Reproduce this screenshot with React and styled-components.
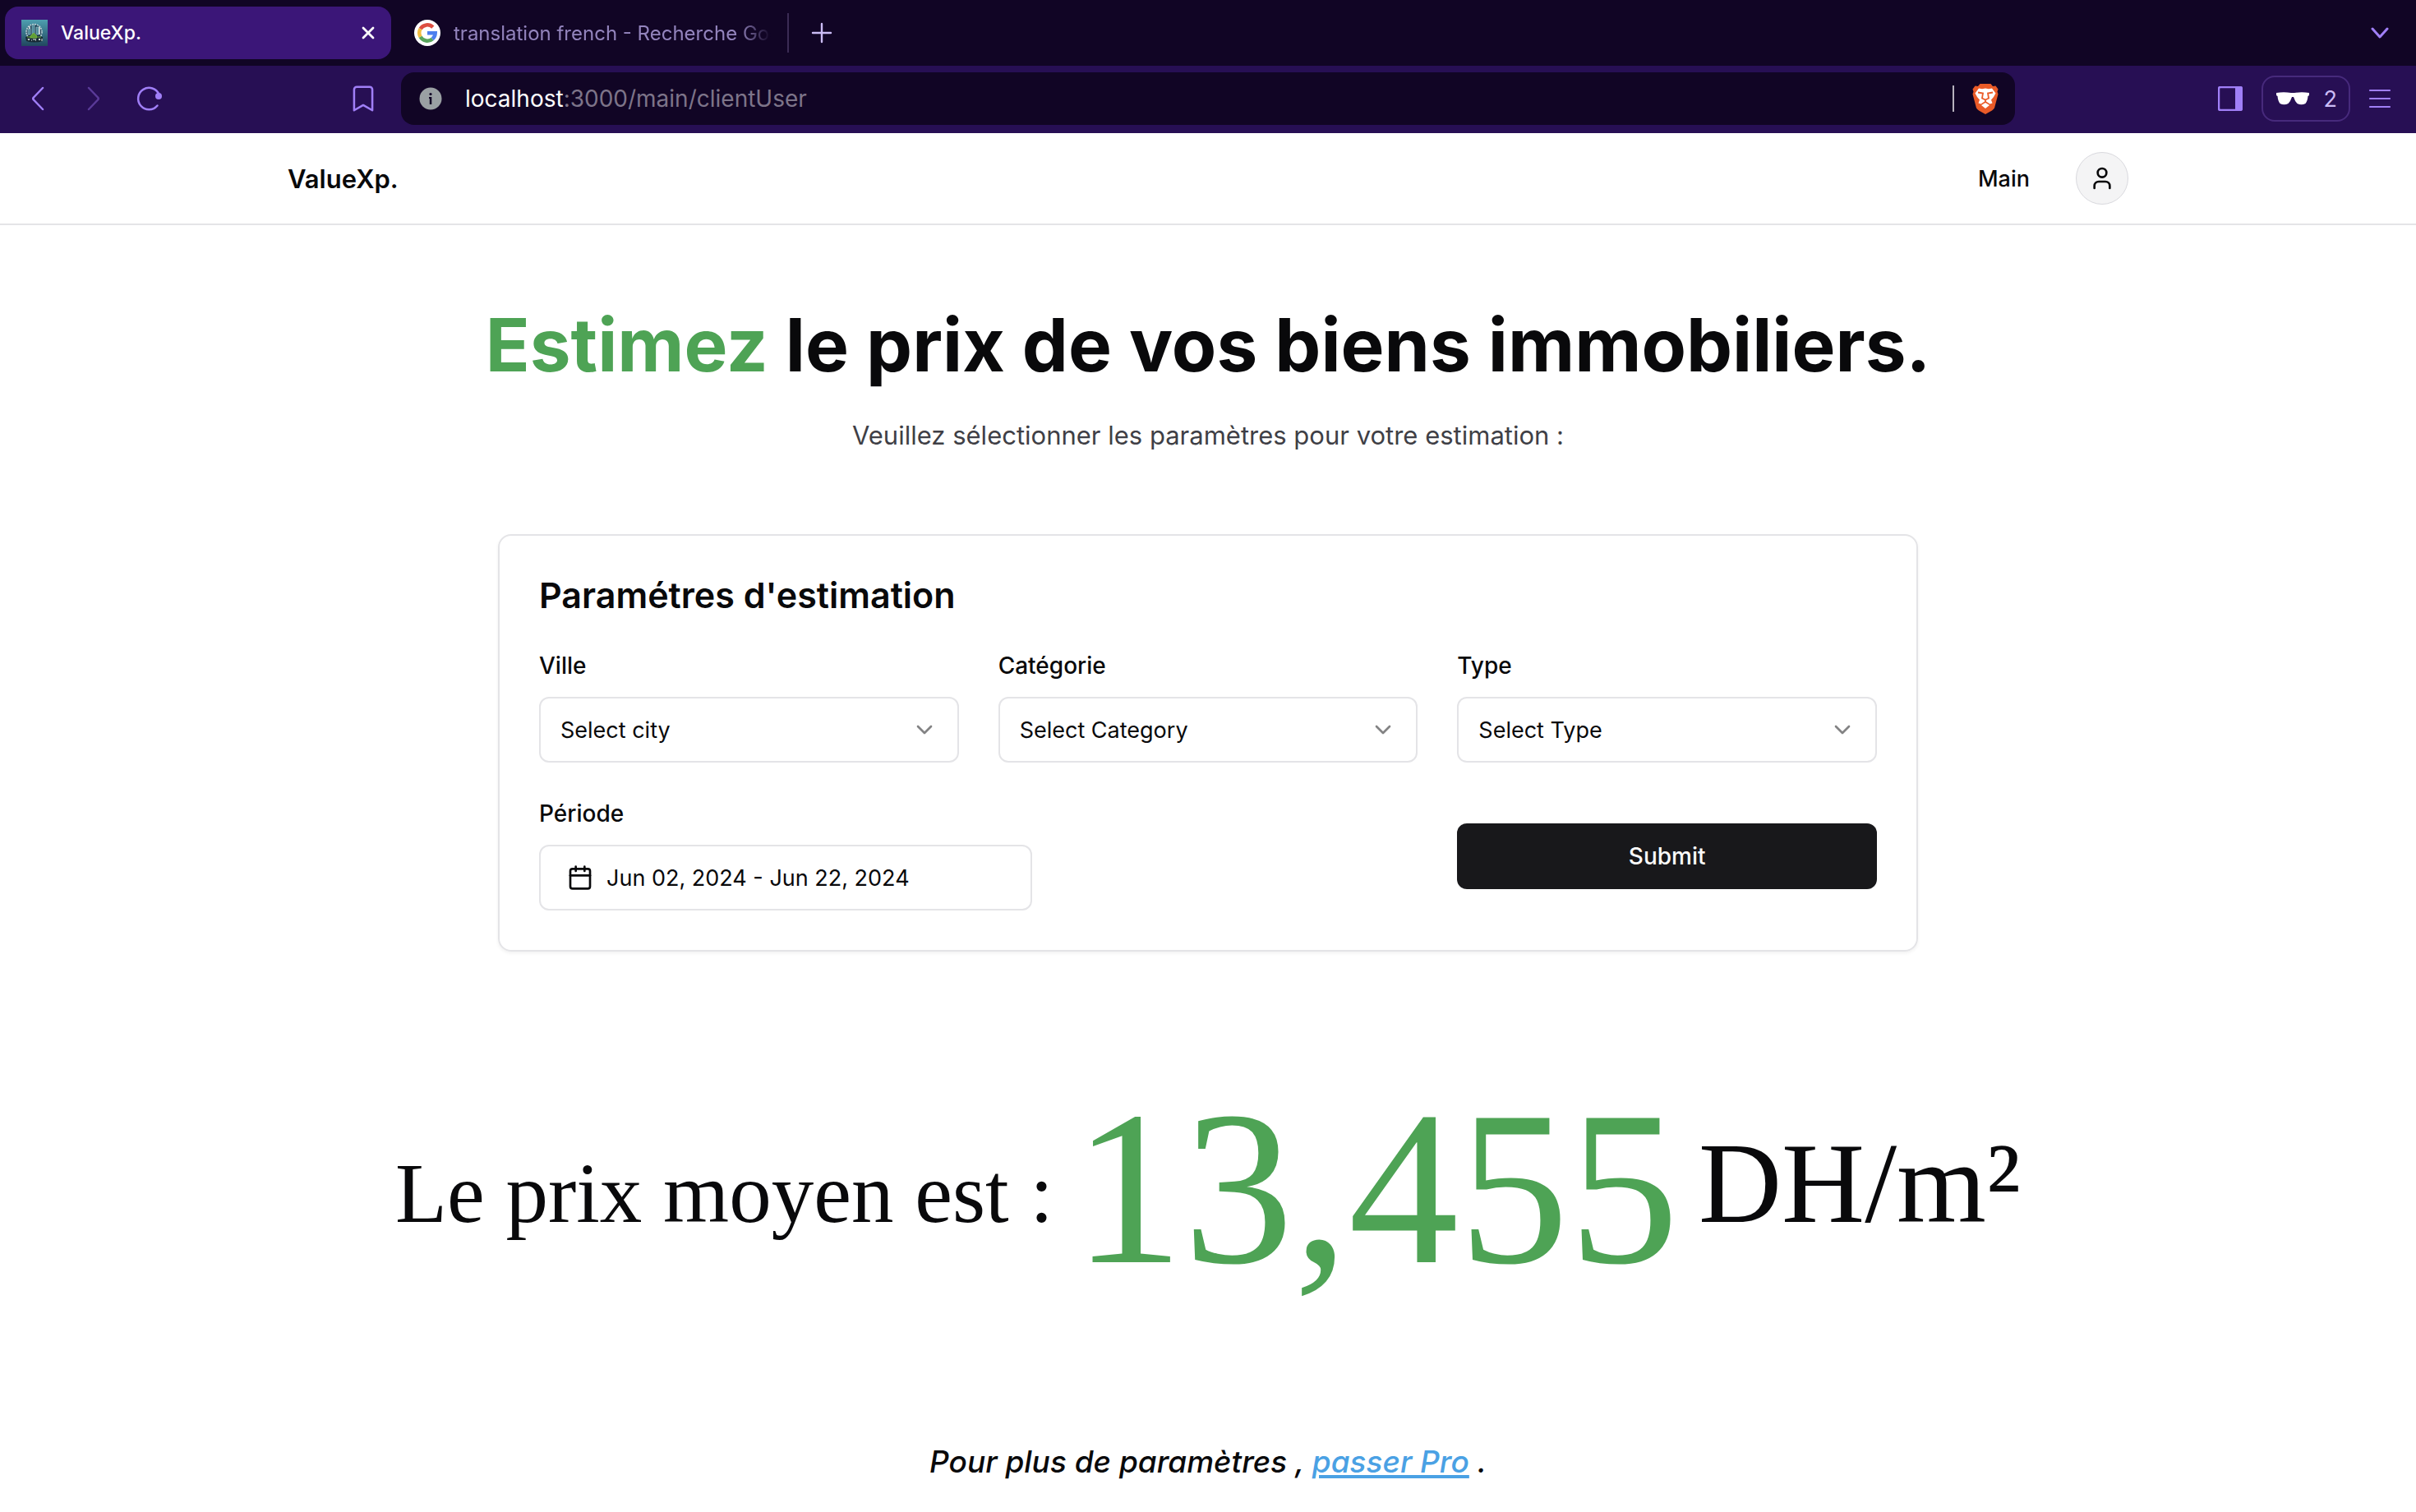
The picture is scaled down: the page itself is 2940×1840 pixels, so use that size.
import React from "react";
import styled, { createGlobalStyle } from "styled-components";
import { Bookmark, Calendar, ChevronDown, User } from "lucide-react";

const sans = `Inter, "Liberation Sans", sans-serif`;
const serif = `"Liberation Serif", serif`;

const color = {
  ink: "#09090b",
  border: "#e4e4e7",
  green: "#4ea355",
  link: "#4aa1e4",
  strip: "#110525",
  toolbar: "#270f54",
  tab: "#3b1678",
  accent: "#a07ff7",
};

const GlobalStyle = createGlobalStyle`
  * { box-sizing: border-box; }
  body { margin: 0; background: #fff; color: ${color.ink}; font-family: ${sans}; font-size: 28px; }
  button, select { font: inherit; color: inherit; }
  h1, h2, p { margin: 0; }
  svg { display: block; flex: none; }
`;

/* ---------- browser frame ---------- */

const TabStrip = styled.div`
  display: flex;
  align-items: center;
  height: 80px;
  padding: 0 32px 0 6px;
  background: ${color.strip};
`;

const Tabs = styled.div`
  display: flex;
  align-items: center;
  gap: 8px;
  padding-right: 4px;
`;

const Tab = styled.div`
  display: flex;
  align-items: center;
  gap: 16px;
  width: 470px;
  height: 64px;
  padding: 0 ${(p) => (p.$active ? 20 : 16)}px 0 20px;
  border-radius: 16px;
  background: ${(p) => (p.$active ? color.tab : "transparent")};
  color: ${(p) => (p.$active ? "#fff" : "#9384bd")};
  font-size: ${(p) => (p.$active ? 23 : 24)}px;
  font-weight: ${(p) => (p.$active ? 500 : 400)};
`;

const TabTitle = styled.span`
  flex: 1;
  min-width: 0;
  overflow: hidden;
  white-space: nowrap;
  mask-image: ${(p) => (p.$fade ? "linear-gradient(to right, #000 90%, transparent)" : "none")};
`;

const Rule = styled.span`
  width: 2px;
  height: ${(p) => p.$height}px;
  background: ${(p) => p.$color};
`;

const IconButton = styled.button`
  display: flex;
  align-items: center;
  justify-content: center;
  width: ${(p) => p.$width || 32}px;
  height: 40px;
  padding: 0;
  border: 0;
  background: none;
  color: ${(p) => p.$color || color.accent};
`;

const NewTab = styled.div`
  flex: 1;
  padding-left: 24px;
`;

const Toolbar = styled.div`
  display: flex;
  align-items: center;
  height: 82px;
  padding: 0 30px 2px 28px;
  background: ${color.toolbar};
`;

const NavButtons = styled.div`
  display: flex;
  flex: none;
  gap: 36px;
  width: 395px;
`;

const AddressArea = styled.div`
  display: flex;
  flex: 1;
  align-items: center;
  gap: 27px;
  padding-right: 246px;
`;

const AddressBar = styled.div`
  display: flex;
  flex: 1;
  align-items: center;
  gap: 22px;
  height: 64px;
  padding: 0 20px 0 22px;
  border-radius: 16px;
  background: ${color.strip};
`;

const Address = styled.button`
  display: flex;
  flex: 1;
  align-items: center;
  gap: 28px;
  padding: 0;
  border: 0;
  background: none;
  color: #7d7489;
  font-size: 28px;
  text-align: left;

  b {
    color: #fff;
    font-weight: 400;
  }
`;

const ToolbarEnd = styled.div`
  display: flex;
  align-items: center;
  gap: 22px;
`;

const PrivateBadge = styled.button`
  display: flex;
  align-items: center;
  justify-content: space-between;
  width: 108px;
  height: 56px;
  padding: 0 14px 0 16px;
  border: 2px solid #472a7c;
  border-radius: 16px;
  background: none;
  color: #cbbcf5;
  font-size: 27px;
`;

/* ---------- page ---------- */

const Header = styled.header`
  display: flex;
  align-items: center;
  justify-content: space-between;
  height: 112px;
  padding: 0 350px;
  border-bottom: 2px solid ${color.border};
`;

const Brand = styled.a`
  color: inherit;
  font-size: 31px;
  font-weight: 600;
  text-decoration: none;
`;

const Nav = styled.nav`
  display: flex;
  align-items: center;
  gap: 56px;
`;

const NavLink = styled.a`
  color: inherit;
  font-size: 27px;
  font-weight: 500;
  text-decoration: none;
`;

const Avatar = styled.button`
  display: flex;
  align-items: center;
  justify-content: center;
  width: 64px;
  height: 64px;
  padding: 0;
  border: 1px solid #d9d9de;
  border-radius: 50%;
  background: #f4f4f5;
`;

const Main = styled.main`
  display: flex;
  flex-direction: column;
  align-items: center;
  padding: 98px 48px 32px;
`;

const Title = styled.h1`
  font-size: 89px;
  line-height: 96px;
  font-weight: 700;
`;

const Green = styled.span`
  color: ${color.green};
`;

const Subtitle = styled.p`
  margin-top: 34px;
  color: #3f3f46;
  font-size: 31px;
  line-height: 56px;
`;

const Card = styled.form`
  width: 100%;
  max-width: 1728px;
  margin-top: 92px;
  padding: 48px;
  border: 2px solid ${color.border};
  border-radius: 16px;
  box-shadow: 0 2px 4px rgba(0, 0, 0, 0.06);
`;

const CardTitle = styled.h2`
  font-size: 43px;
  line-height: 48px;
  font-weight: 600;
`;

const Fields = styled.div`
  display: grid;
  grid-template-columns: repeat(3, 1fr);
  gap: 48px;
  margin-top: 48px;
`;

const FieldRow = styled(Fields)`
  align-items: center;
`;

const Field = styled.div`
  display: flex;
  flex-direction: column;
  gap: 24px;
  grid-column: span ${(p) => p.$span || 1};
`;

const Label = styled.label`
  font-size: 28px;
  line-height: 28px;
  font-weight: 500;
`;

const SelectBox = styled.div`
  display: grid;
  align-items: center;

  > * {
    grid-area: 1 / 1;
  }

  svg {
    justify-self: end;
    margin-right: 26px;
    opacity: 0.5;
    pointer-events: none;
  }
`;

const Select = styled.select`
  width: 100%;
  height: 80px;
  padding: 0 64px 0 24px;
  appearance: none;
  border: 2px solid ${color.border};
  border-radius: 12px;
  background: #fff;
  font-size: 27px;
`;

const DateButton = styled.button`
  display: flex;
  align-items: center;
  gap: 16px;
  width: 600px;
  height: 80px;
  padding: 0 32px;
  border: 2px solid ${color.border};
  border-radius: 12px;
  background: #fff;
  font-size: 27px;
`;

const Submit = styled.button`
  height: 80px;
  border: 0;
  border-radius: 12px;
  background: #18181b;
  color: #fafafa;
  font-size: 28px;
  font-weight: 500;
`;

const Price = styled.p`
  display: flex;
  align-items: baseline;
  gap: 24px;
  margin-top: 212px;
  font-family: ${serif};
  font-size: 103px;
  line-height: 140px;
  white-space: nowrap;
`;

const Amount = styled(Green)`
  align-self: center;
  font-size: 268px;
  line-height: 140px;
`;

const Unit = styled.span`
  font-size: 140px;
  line-height: 140px;
`;

const Upgrade = styled.p`
  margin-top: 229px;
  font-size: 37px;
  line-height: 56px;
  font-style: italic;
  font-weight: 500;

  a {
    color: ${color.link};
    text-decoration-thickness: 4px;
    text-underline-offset: 3px;
  }
`;

/* ---------- drawings ---------- */

const stroke = { fill: "none", stroke: "currentColor", strokeLinecap: "round", strokeLinejoin: "round" };

const SiteIcon = () => (
  <svg width="32" height="32" viewBox="0 0 32 32" aria-hidden="true">
    <defs>
      <linearGradient id="sky" x2="0" y2="1">
        <stop stopColor="#4e9fb0" />
        <stop offset="1" stopColor="#21475f" />
      </linearGradient>
    </defs>
    <path fill="url(#sky)" d="M0 0h32v32H0z" />
    <circle cx="15.500" cy="15" r="9.500" fill="#20455a" stroke="#c5d8dc" strokeWidth="1.500" strokeDasharray="2 1" />
    <path d="M8 18v-7h3v7zm5 0V6h3v12zm5 0V9h3v9z" fill="#4a8796" stroke="#a9cfd4" strokeWidth=".6" />
    <path d="M22 9v9M10 8v3" stroke="#e8eef0" strokeWidth="1.500" />
    <path d="M5 21l6-2 4-3 4 3 7 2v5q-10 3-20 0z" fill="#172a35" />
    <path d="M11 20l4-4 4 4v2h-8zM7 21h4M20 21h4" fill="#5f9e35" stroke="#76b342" />
    <path d="M8 23l1 2 1-2m2 2h1m2-2v2m2-2v2h1m3-2l2 2m0-2l-2 2m4-2v3" stroke="#e9f0e8" fill="none" />
  </svg>
);

const GoogleIcon = () => (
  <svg width="32" height="32" viewBox="0 0 32 32" aria-hidden="true">
    <circle cx="16" cy="16" r="16" fill="#fff" />
    <g fill="none" strokeWidth="4.500">
      <path stroke="#dc4e41" d="M22.800 9.200A9.700 9.700 0 0 0 7.600 11.150" />
      <path stroke="#f2bd42" d="M7.600 11.150A9.700 9.700 0 0 0 7.600 20.850" />
      <path stroke="#58a55c" d="M7.600 20.850A9.700 9.700 0 0 0 22.200 23.400" />
      <path stroke="#4e80ee" d="M22.200 23.400A9.700 9.700 0 0 0 25.700 16.300H16" />
    </g>
  </svg>
);

const CloseIcon = () => (
  <svg width="16" height="16" viewBox="0 0 16 16" aria-hidden="true">
    <path {...stroke} strokeWidth="2.800" d="M2 2l12 12M14 2L2 14" />
  </svg>
);

const PlusIcon = () => (
  <svg width="26" height="26" viewBox="0 0 26 26" aria-hidden="true">
    <path {...stroke} strokeWidth="2.400" d="M13 2v22M2 13h22" />
  </svg>
);

const Chevron = ({ forward }) => (
  <svg width="16" height="30" viewBox="0 0 16 30" aria-hidden="true">
    <path {...stroke} strokeWidth="2.500" d={forward ? "M2 2l11 11.500q1.500 1.500 0 3L2 28" : "M14 2L3 13.500q-1.500 1.500 0 3L14 28"} />
  </svg>
);

const TabsChevron = () => (
  <svg width="22" height="16" viewBox="0 0 22 16" aria-hidden="true">
    <path {...stroke} strokeWidth="3" d="M2 3l9 10 9-10" />
  </svg>
);

const ReloadIcon = () => (
  <svg width="32" height="32" viewBox="0 0 32 32" aria-hidden="true">
    <path {...stroke} strokeWidth="2.500" d="M25.500 24.500A13.200 13.200 0 1 1 27.500 11" />
    <circle cx="27" cy="13" r="4" fill="currentColor" />
  </svg>
);

const InfoIcon = () => (
  <svg width="28" height="28" viewBox="0 0 28 28" aria-hidden="true">
    <circle cx="14" cy="14" r="13.500" fill="#9aa0a3" />
    <circle cx="14" cy="8.500" r="1.600" fill={color.strip} />
    <path fill={color.strip} d="M12 12h3.300v9h-2.500v-7H12z" />
  </svg>
);

const LionIcon = () => (
  <svg width="32" height="38" viewBox="0 0 32 38" aria-hidden="true">
    <path fill="#ea5b28" d="M9.500 1h13l2.500 3 3.500-.5 3 4-1 3 1 3-4.500 17Q26 32 24 33.500L16 38l-8-4.500Q6 32 5 30.500L.500 13.500l1-3-1-3 3-4L7 4z" />
    <path fill="#fff" d="M16 6.500l4 .7 4-.7 4.500 6-2.500 4.500-3 3.500 1.500 4-3 1-4.500-3h-2l-4.500 3-3-1 1.500-4-3-3.500L3.500 12.500 8 6.500l4 .7z" />
    <path fill="none" stroke="#ea5b28" strokeWidth="1.800" d="M7 11.500l6 1-1 6 4 2 4-2-1-6 6-1M16 20v5" />
    <path fill="#fff" d="M16 24l5 3-5 4-5-4z" />
  </svg>
);

const PanelIcon = () => (
  <svg width="30" height="30" viewBox="0 0 30 30" aria-hidden="true">
    <rect x="1" y="1" width="28" height="28" rx="2" fill="none" stroke="currentColor" strokeWidth="2.500" />
    <path fill="currentColor" d="M21 1h8v28h-8z" />
  </svg>
);

const GlassesIcon = () => (
  <svg width="40" height="16" viewBox="0 0 40 16" aria-hidden="true">
    <path fill="#fff" d="M0 1q9-1.500 18 0h4q9-1.500 18 0v3l-1.500 1q-.5 6-3 9-5 2.500-10 0Q22.500 11 21 6h-2q-1.500 5-4.500 8-5 2.500-10 0-2.500-3-3-9L0 4z" />
  </svg>
);

const MenuIcon = () => (
  <svg width="28" height="24" viewBox="0 0 28 24" aria-hidden="true">
    <path {...stroke} strokeWidth="2.200" d="M2 2h24M2 12h24M2 22h24" />
  </svg>
);

/* ---------- app ---------- */

const selects = [
  { id: "ville", label: "Ville", placeholder: "Select city" },
  { id: "categorie", label: "Catégorie", placeholder: "Select Category" },
  { id: "type", label: "Type", placeholder: "Select Type" },
];

function BrowserFrame() {
  return (
    <>
      <TabStrip>
        <Tabs>
          <Tab $active>
            <SiteIcon />
            <TabTitle>ValueXp.</TabTitle>
            <IconButton $width={16} $color="#fff" aria-label="Close tab"><CloseIcon /></IconButton>
          </Tab>
          <Tab>
            <GoogleIcon />
            <TabTitle $fade>translation french - Recherche Google</TabTitle>
          </Tab>
        </Tabs>
        <Rule $height={48} $color="#3b2b54" />
        <NewTab>
          <IconButton $color="#cbbcf5" aria-label="New tab"><PlusIcon /></IconButton>
        </NewTab>
        <IconButton $width={24} aria-label="Search tabs"><TabsChevron /></IconButton>
      </TabStrip>
      <Toolbar>
        <NavButtons>
          <IconButton $width={36} aria-label="Back"><Chevron /></IconButton>
          <IconButton $width={28} $color="#5a3a98" aria-label="Forward"><Chevron forward /></IconButton>
          <IconButton $width={36} aria-label="Reload"><ReloadIcon /></IconButton>
        </NavButtons>
        <AddressArea>
          <IconButton $width={38} aria-label="Bookmark"><Bookmark size={38} strokeWidth={1.6} /></IconButton>
          <AddressBar>
            <Address>
              <InfoIcon />
              <span><b>localhost</b>:3000/main/clientUser</span>
            </Address>
            <Rule $height={32} $color="#b7b2bd" />
            <IconButton aria-label="Shields"><LionIcon /></IconButton>
          </AddressBar>
        </AddressArea>
        <ToolbarEnd>
          <IconButton aria-label="Sidebar"><PanelIcon /></IconButton>
          <PrivateBadge><GlassesIcon />2</PrivateBadge>
          <IconButton $width={28} aria-label="Menu"><MenuIcon /></IconButton>
        </ToolbarEnd>
      </Toolbar>
    </>
  );
}

export default function App() {
  return (
    <>
      <GlobalStyle />
      <BrowserFrame />
      <Header>
        <Brand href="#">ValueXp.</Brand>
        <Nav>
          <NavLink href="#">Main</NavLink>
          <Avatar aria-label="Account"><User size={32} /></Avatar>
        </Nav>
      </Header>
      <Main>
        <Title><Green>Estimez</Green> le prix de vos biens immobiliers.</Title>
        <Subtitle>Veuillez sélectionner les paramètres pour votre estimation :</Subtitle>
        <Card onSubmit={(e) => e.preventDefault()}>
          <CardTitle>Paramétres d'estimation</CardTitle>
          <Fields>
            {selects.map((s) => (
              <Field key={s.id}>
                <Label htmlFor={s.id}>{s.label}</Label>
                <SelectBox>
                  <Select id={s.id}><option>{s.placeholder}</option></Select>
                  <ChevronDown size={32} />
                </SelectBox>
              </Field>
            ))}
          </Fields>
          <FieldRow>
            <Field $span={2}>
              <Label htmlFor="periode">Période</Label>
              <DateButton id="periode" type="button">
                <Calendar size={32} />
                Jun 02, 2024 - Jun 22, 2024
              </DateButton>
            </Field>
            <Submit type="submit">Submit</Submit>
          </FieldRow>
        </Card>
        <Price>
          <span>Le prix moyen est :</span>
          <Amount>13,455</Amount>
          <Unit>DH/m²</Unit>
        </Price>
        <Upgrade>Pour plus de paramètres , <a href="#">passer Pro</a> .</Upgrade>
      </Main>
    </>
  );
}
